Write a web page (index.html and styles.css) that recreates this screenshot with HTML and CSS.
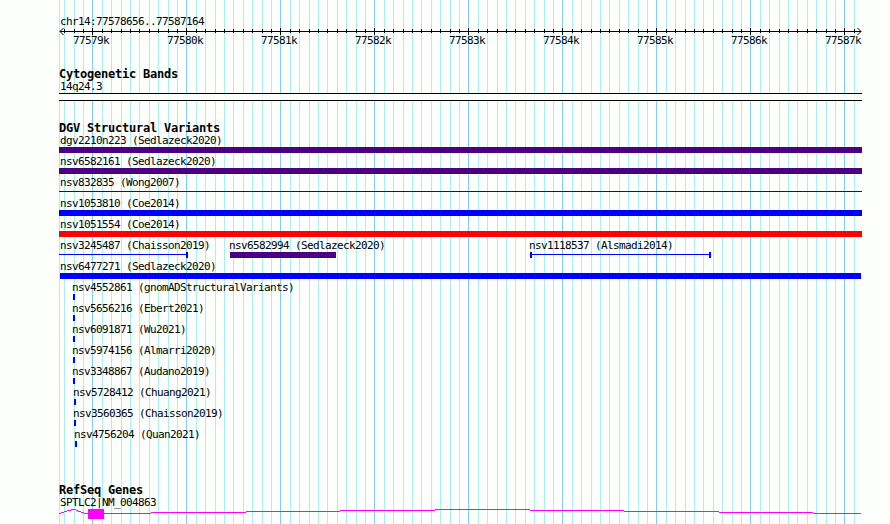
FILE: index.html
```
<!DOCTYPE html>
<html lang="en">
<head>
  <meta charset="UTF-8">
  <meta name="viewport" content="width=device-width, initial-scale=1">
  <title>chr14:77578656..77587164</title>
  <link rel="stylesheet" href="styles.css">
</head>
<body>
  <div class="panel">

    <!-- Scale -->
    <div class="ruler">
      <div class="label">chr14:77578656..77587164</div>
      <svg class="axis" width="803" height="9" viewBox="0 0 803 9">
        <defs>
          <pattern id="ticks" x="33" y="0" width="94" height="9" patternUnits="userSpaceOnUse">
            <path d="M0 1h1v7h-1z M10 2h1v4h-1z M19 2h1v4h-1z M29 2h1v4h-1z M38 2h1v4h-1z M47 2h1v4h-1z M57 2h1v4h-1z M66 2h1v4h-1z M76 2h1v4h-1z M85 2h1v4h-1z"/>
          </pattern>
        </defs>
        <rect x="5" y="0" width="791" height="9" fill="url(#ticks)"/>
        <path class="arrow" d="M1 4.5H802 M4.5 1L1 4.5L4.5 8 M798.5 1L802 4.5L798.5 8"/>
      </svg>
      <div class="positions">
        <span>77579k</span>
        <span>77580k</span>
        <span>77581k</span>
        <span>77582k</span>
        <span>77583k</span>
        <span>77584k</span>
        <span>77585k</span>
        <span>77586k</span>
        <span>77587k</span>
      </div>
    </div>

    <!-- Cytogenetic Bands -->
    <div class="track cyto">
      <h2>Cytogenetic Bands</h2>
      <div class="label">14q24.3</div>
      <div class="band"></div>
    </div>

    <!-- DGV Structural Variants -->
    <div class="track variants">
      <h2>DGV Structural Variants</h2>
      <div class="row">
        <div class="feature"><div class="label">dgv2210n223 (Sedlazeck2020)</div><div class="bar complex"></div></div>
      </div>
      <div class="row">
        <div class="feature"><div class="label">nsv6582161 (Sedlazeck2020)</div><div class="bar complex"></div></div>
      </div>
      <div class="row">
        <div class="feature"><div class="label">nsv832835 (Wong2007)</div><div class="bar line"></div></div>
      </div>
      <div class="row">
        <div class="feature"><div class="label">nsv1053810 (Coe2014)</div><div class="bar gain"></div></div>
      </div>
      <div class="row">
        <div class="feature"><div class="label">nsv1051554 (Coe2014)</div><div class="bar loss"></div></div>
      </div>
      <div class="row">
        <div class="feature" style="width: 129px"><div class="label">nsv3245487 (Chaisson2019)</div><div class="bar line end"></div></div>
        <div class="feature near" style="margin-left: 42px; width: 106px"><div class="label">nsv6582994 (Sedlazeck2020)</div><div class="bar complex"></div></div>
        <div class="feature near" style="margin-left: 194px; width: 181px"><div class="label">nsv1118537 (Alsmadi2014)</div><div class="bar line start end"></div></div>
      </div>
      <div class="row">
        <div class="feature flush" style="margin-left: 1px; width: 801px"><div class="label">nsv6477271 (Sedlazeck2020)</div><div class="bar gain"></div></div>
      </div>
      <div class="row">
        <div class="feature near" style="margin-left: 14px; width: 2px"><div class="label">nsv4552861 (gnomADStructuralVariants)</div><div class="bar gain"></div></div>
      </div>
      <div class="row">
        <div class="feature near" style="margin-left: 14px; width: 2px"><div class="label">nsv5656216 (Ebert2021)</div><div class="bar gain"></div></div>
      </div>
      <div class="row">
        <div class="feature near" style="margin-left: 14px; width: 2px"><div class="label">nsv6091871 (Wu2021)</div><div class="bar gain"></div></div>
      </div>
      <div class="row">
        <div class="feature near" style="margin-left: 14px; width: 2px"><div class="label">nsv5974156 (Almarri2020)</div><div class="bar gain"></div></div>
      </div>
      <div class="row">
        <div class="feature near" style="margin-left: 14px; width: 2px"><div class="label">nsv3348867 (Audano2019)</div><div class="bar gain"></div></div>
      </div>
      <div class="row">
        <div class="feature near" style="margin-left: 15px; width: 2px"><div class="label">nsv5728412 (Chuang2021)</div><div class="bar gain"></div></div>
      </div>
      <div class="row">
        <div class="feature near" style="margin-left: 15px; width: 2px"><div class="label">nsv3560365 (Chaisson2019)</div><div class="bar gain"></div></div>
      </div>
      <div class="row">
        <div class="feature near" style="margin-left: 16px; width: 2px"><div class="label">nsv4756204 (Quan2021)</div><div class="bar gain"></div></div>
      </div>
    </div>

    <!-- RefSeq Genes -->
    <div class="track genes">
      <h2>RefSeq Genes</h2>
      <div class="label">SPTLC2|NM_004863</div>
      <svg class="gene" width="803" height="12" viewBox="0 0 803 12">
        <path class="intron" d="M0 5.5H2 M2 4.5H5 M5 3.5H8 M8 2.5H12 M12 1.5H17 M17 2.5H19 M19 3.5H22 M22 4.5H25 M25 5.5H29"/>
        <rect class="exon" x="29" y="1" width="16" height="10"/>
        <path class="intron" d="M45 5.5H92 M92 4.5H187 M187 3.5H281 M281 2.5H376 M376 1.5H471 M471 2.5H565 M565 3.5H660 M660 4.5H754 M754 5.5H802"/>
      </svg>
    </div>

  </div>
</body>
</html>
```
FILE: styles.css
```
body {
  margin: 0;
  background: #fdfffc;
  color: #000;
  font-family: 'DejaVu Sans Mono', 'Liberation Mono', monospace;
  overflow: hidden;
}

/* Grid lines: one strong line per kb, nine light ones between */
.panel {
  box-sizing: border-box;
  width: 803px;
  height: 524px;
  margin-left: 59px;
  padding-top: 15px;
  overflow: hidden;
  background-image:
    linear-gradient(#afeeee, #afeeee),
    linear-gradient(90deg,
      #87ceeb 1px, transparent 1px 10px,
      #afeeee 10px 11px, transparent 11px 19px,
      #afeeee 19px 20px, transparent 20px 29px,
      #afeeee 29px 30px, transparent 30px 38px,
      #afeeee 38px 39px, transparent 39px 47px,
      #afeeee 47px 48px, transparent 48px 57px,
      #afeeee 57px 58px, transparent 58px 66px,
      #afeeee 66px 67px, transparent 67px 76px,
      #afeeee 76px 77px, transparent 77px 85px,
      #afeeee 85px 86px, transparent 86px);
  background-size: 1px 100%, 94px 100%;
  background-position: 0 0, 33px 0;
  background-repeat: no-repeat, repeat-x;
}

h2 {
  margin: 0;
  font-size: 12px;
  line-height: 12px;
  height: 12px;
  letter-spacing: -0.224px;
  white-space: nowrap;
}

.label {
  height: 12px;
  padding-left: 1px;
  font-size: 11px;
  line-height: 14px;
  letter-spacing: -0.622px;
  white-space: nowrap;
}

/* Scale */
.axis {
  display: block;
}

.arrow {
  fill: none;
  stroke: #000;
  stroke-width: 1;
}

.positions {
  display: flex;
  margin-left: -15px;
  font-size: 11px;
  line-height: 10px;
  height: 12px;
  letter-spacing: -0.622px;
}

.positions span {
  flex: 0 0 94px;
  text-align: center;
}

/* Tracks */
.cyto {
  margin-top: 20px;
}

.band {
  height: 6px;
  margin-top: 1px;
  background: #fdfffc;
  border-top: 1px solid #000;
  border-bottom: 1px solid #000;
}

.variants {
  margin-top: 21px;
}

.row {
  display: flex;
  height: 21px;
}

.feature {
  width: 803px;
}

.feature .label {
  height: 13px;
}

.feature.near .label {
  padding-left: 0;
  margin-left: -1px;
}

.feature.flush .label {
  padding-left: 0;
}

.bar {
  box-sizing: border-box;
  height: 6px;
}

.complex {
  background: #4b0082;
}

.gain {
  background: #0000ff;
}

.loss {
  background: #ff0000;
}

.line {
  background: linear-gradient(#0000ff, #0000ff) 0 2px / 100% 1px no-repeat;
}

.line.start {
  border-left: 2px solid #0000ff;
}

.line.end {
  border-right: 2px solid #0000ff;
}

.genes {
  margin-top: 35px;
}

.gene {
  display: block;
}

.intron {
  fill: none;
  stroke: #ff00ff;
  shape-rendering: crispEdges;
}

.exon {
  fill: #ff00ff;
}
```
